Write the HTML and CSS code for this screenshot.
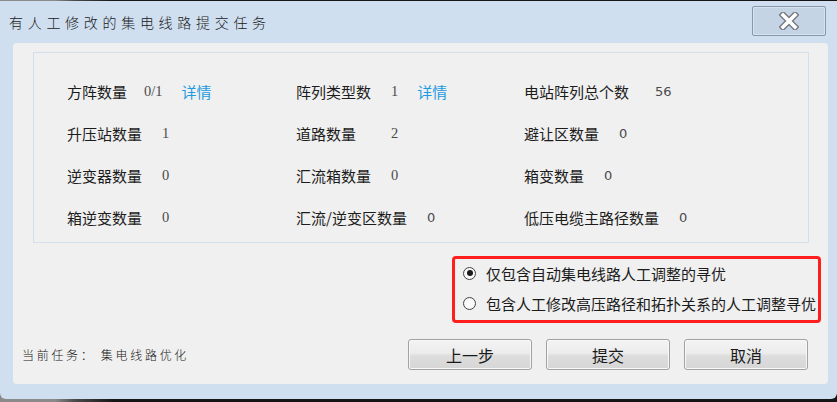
FILE: index.html
```html
<!DOCTYPE html>
<html lang="zh-CN">
<head>
<meta charset="utf-8">
<title>有人工修改的集电线路提交任务</title>
<link rel="stylesheet" href="styles.css">
</head>
<body>
<div class="window">
  <div class="titlebar">
    <div class="title">有人工修改的集电线路提交任务</div>
    <div class="close">
      <svg width="20" height="18" viewBox="0 0 20 18">
        <path d="M4 3 L16 15 M16 3 L4 15" stroke="#767a80" stroke-width="6.4" stroke-linecap="square" fill="none"/>
        <path d="M4 3 L16 15 M16 3 L4 15" stroke="#ffffff" stroke-width="3.6" stroke-linecap="square" fill="none"/>
      </svg>
    </div>
  </div>
  <div class="client">
    <div class="group">
      <div class="item"><span class="label">方阵数量</span><span class="val serif v-tight">0/1</span><span class="link">详情</span></div>
      <div class="item"><span class="label">阵列类型数</span><span class="val serif">1</span><span class="link">详情</span></div>
      <div class="item"><span class="label">电站阵列总个数</span><span class="val v-wide">56</span></div>

      <div class="item"><span class="label">升压站数量</span><span class="val serif">1</span></div>
      <div class="item"><span class="label">道路数量</span><span class="val serif v-road">2</span></div>
      <div class="item"><span class="label">避让区数量</span><span class="val">0</span></div>

      <div class="item"><span class="label">逆变器数量</span><span class="val serif">0</span></div>
      <div class="item"><span class="label">汇流箱数量</span><span class="val serif">0</span></div>
      <div class="item"><span class="label">箱变数量</span><span class="val">0</span></div>

      <div class="item"><span class="label">箱逆变数量</span><span class="val serif">0</span></div>
      <div class="item"><span class="label">汇流/逆变区数量</span><span class="val">0</span></div>
      <div class="item"><span class="label">低压电缆主路径数量</span><span class="val">0</span></div>
    </div>

    <div class="options">
      <div class="opt"><span class="radio checked"></span><span>仅包含自动集电线路人工调整的寻优</span></div>
      <div class="opt"><span class="radio"></span><span>包含人工修改高压路径和拓扑关系的人工调整寻优</span></div>
    </div>

    <div class="footer">
      <div class="task">当前任务： 集电线路优化</div>
      <div class="buttons">
        <div class="btn">上一步</div>
        <div class="btn">提交</div>
        <div class="btn">取消</div>
      </div>
    </div>
  </div>
</div>
</body>
</html>
```

FILE: styles.css
```css
* { box-sizing: border-box; }
html, body {
  margin: 0;
  padding: 0;
}
body {
  width: 837px;
  height: 402px;
  overflow: hidden;
  background: linear-gradient(to right, #8a8a8a 0, #8a8a8a 55px, #4a4a4a 75px, #151515 115px, #151515 100%);
  font-family: "Noto Sans CJK SC", "Noto Sans", sans-serif;
}
.window {
  margin-top: 1px;
  height: 398px;
  background: #cfdff0;
  border-radius: 0 0 6px 6px;
  display: flex;
  flex-direction: column;
}
.titlebar {
  height: 42px;
  flex: none;
  display: flex;
  justify-content: space-between;
  align-items: flex-start;
  padding: 0 11px 0 9px;
}
.title {
  line-height: 42px;
  font-size: 14px;
  letter-spacing: 4.7px;
  color: #202020;
  font-weight: 300;
}
.close {
  margin-top: 5px;
  width: 74px;
  height: 30px;
  background: #c4d4e4;
  border: 1px solid #8797ae;
  border-radius: 2px;
  box-shadow: inset 0 0 0 1px #d6e2ee;
  display: flex;
  align-items: center;
  justify-content: center;
}
.close svg { display: block; }
.client {
  flex: 1;
  margin: 0 9px 15px 13px;
  background: #f0f0f0;
  border-radius: 4px;
  padding: 9px 19px 14px 20px;
  display: flex;
  flex-direction: column;
}
.group {
  height: 191px;
  flex: none;
  border: 1px solid #d3e0eb;
  display: grid;
  grid-template-columns: 229px 228px 1fr;
  grid-auto-rows: 42px;
  padding: 17px 0 0 33px;
}
.item {
  display: flex;
  align-items: center;
  white-space: nowrap;
}
.label {
  font-size: 15px;
  color: #1c1c1c;
}
.val {
  margin-left: 20px;
  font-size: 13px;
  color: #4a4a4a;
  font-family: "DejaVu Sans", "Liberation Sans", sans-serif;
}
.val.serif {
  font-family: "Liberation Serif", "DejaVu Serif", serif;
  font-size: 14.5px;
}
.v-tight { margin-left: 17px; }
.v-road { margin-left: 35px; }
.v-wide { margin-left: 26px; }
.link {
  margin-left: 19px;
  font-size: 15px;
  color: #1e9ae0;
}
.options {
  margin-top: 13px;
  align-self: flex-end;
  margin-right: -12px;
  width: 369px;
  height: 67px;
  border: 3px solid #ff1e1e;
  border-radius: 4px;
  padding: 0 0 0 8px;
  display: flex;
  flex-direction: column;
  gap: 2px;
}
.opt {
  height: 28px;
  display: flex;
  align-items: center;
  font-size: 15px;
  color: #1c1c1c;
  white-space: nowrap;
}
.radio {
  width: 13px;
  height: 13px;
  border-radius: 50%;
  border: 1px solid #444444;
  background: radial-gradient(circle, #ffffff 0, #f2f2f2 100%);
  margin-right: 10px;
  flex: none;
  display: flex;
  align-items: center;
  justify-content: center;
}
.radio.checked::after {
  content: "";
  width: 6px;
  height: 6px;
  border-radius: 50%;
  background: #1a1a1a;
}
.footer {
  margin-top: 16px;
  height: 31px;
  display: flex;
  align-items: center;
  justify-content: space-between;
}
.task {
  margin-left: -11px;
  font-size: 12px;
  letter-spacing: 2.7px;
  color: #202020;
  font-weight: 300;
  white-space: nowrap;
}
.buttons {
  display: flex;
  gap: 14px;
  margin-right: 1px;
}
.btn {
  width: 124px;
  height: 31px;
  border: 1px solid #a2a2a2;
  border-radius: 3px;
  background: linear-gradient(to bottom, #f3f3f3 0, #ececec 45%, #dddddd 55%, #d6d6d6 100%);
  box-shadow: inset 0 0 0 1px #f8f8f8;
  display: flex;
  align-items: center;
  justify-content: center;
  font-size: 16px;
  color: #1a1a1a;
}
```
